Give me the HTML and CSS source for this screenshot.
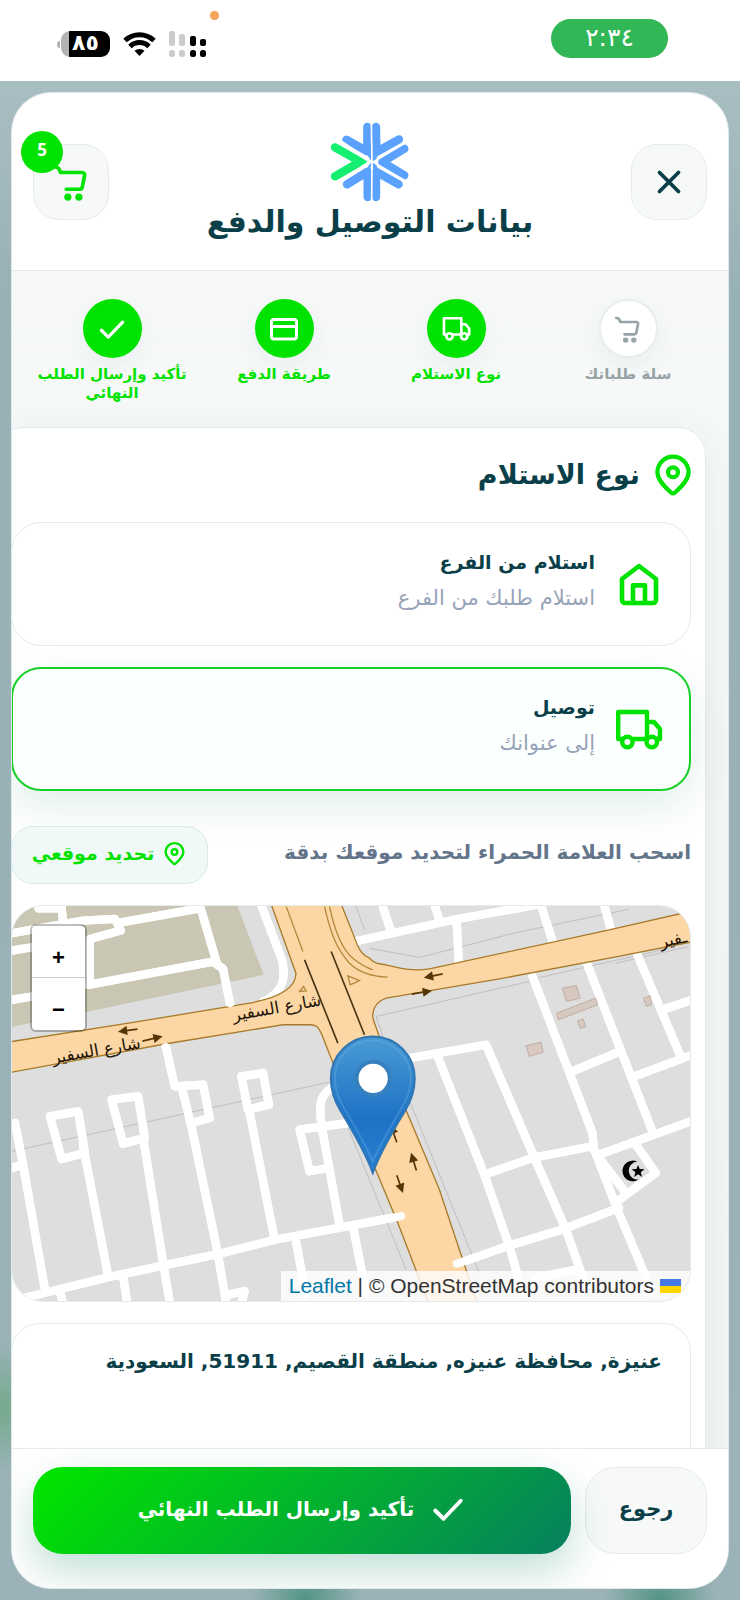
FILE: index.html
```html
<!DOCTYPE html>
<html lang="ar" dir="rtl">
<head>
<meta charset="utf-8">
<meta name="viewport" content="width=device-width, initial-scale=1">
<title>بيانات التوصيل والدفع</title>
<link rel="stylesheet" href="styles.css">
</head>
<body>
<svg class="defs" aria-hidden="true">
  <symbol id="cart" viewBox="0 0 24 24"><g fill="none" stroke="currentColor" stroke-width="2.300" stroke-linecap="round" stroke-linejoin="round"><path d="M2 2.500c1.800 0 2.200.6 2.700 1.700L5.400 6H19a1.600 1.600 0 0 1 1.600 2l-1.500 7.200a1.800 1.800 0 0 1-1.800 1.400H9"/></g><circle cx="10" cy="21.500" r="2.300" fill="currentColor"/><circle cx="17" cy="21.500" r="2.300" fill="currentColor"/></symbol>
  <symbol id="truck" viewBox="0 0 24 24"><g fill="none" stroke="currentColor" stroke-width="2.200" stroke-linejoin="round"><path d="M4 17H1.600V3.500H16V17H8.500M16 8.500h3.500l3 3.500v5h-2M16 17h0"/><circle cx="6.200" cy="18.500" r="2.600"/><circle cx="18.400" cy="18.500" r="2.600"/></g></symbol>
  <symbol id="pin" viewBox="0 0 24 24"><g fill="none" stroke="currentColor" stroke-width="2.300" stroke-linejoin="round"><path d="M20.500 10.500c0 4.700-5 8.800-7.500 11.100a1.500 1.500 0 0 1-2 0C8.500 19.300 3.500 15.200 3.500 10.500a8.500 8.500 0 0 1 17 0z"/><circle cx="12" cy="10.500" r="2.700"/></g></symbol>
  <symbol id="check" viewBox="0 0 24 24"><path d="M3.500 13l5.500 5.500L20.500 6.500" fill="none" stroke="currentColor" stroke-width="2.600" stroke-linecap="round" stroke-linejoin="round"/></symbol>
</svg>

<div class="status">
  <time class="clock"><bdi dir="ltr">٢:٣٤</bdi></time>
  <span class="mic-dot"></span>
  <div class="signals">
    <svg width="38" height="26" viewBox="0 0 38 26" aria-hidden="true"><g fill="#ccc"><rect width="6" height="15" rx="2"/><rect x="10" y="3" width="6" height="12" rx="2"/><rect y="19" width="6" height="7" rx="2.500"/><rect x="10" y="19" width="6" height="7" rx="2.500"/></g><rect x="21" y="5" width="6" height="10" rx="2"/><rect x="31" y="8" width="6" height="7" rx="2"/><rect x="21" y="19" width="6" height="7" rx="2.500"/><rect x="31" y="19" width="6" height="7" rx="2.500"/></svg>
    <svg width="33" height="24" viewBox="0 0 33 24" aria-hidden="true"><g fill="none" stroke="#000" stroke-width="5"><path d="M2 8.500a21 21 0 0 1 29 0"/><path d="M7 14.500a13.500 13.500 0 0 1 19 0"/></g><path d="M16.500 24l-5-5.200a7.500 7.500 0 0 1 10 0z"/></svg>
    <span class="battery"><span>٨٥</span></span>
  </div>
</div>

<main class="panel">
  <header class="head">
    <button class="icon-btn" type="button" aria-label="إغلاق"><svg width="26" height="26" viewBox="0 0 26 26"><path d="M3.500 3.500l19 19M22.500 3.500l-19 19" stroke="currentColor" stroke-width="3.800" stroke-linecap="round"/></svg></button>
    <div class="brand">
      <svg width="82" height="80" viewBox="0 0 246 240" aria-hidden="true">
        <g fill="none" stroke-width="25" stroke-linecap="round" stroke-linejoin="round">
          <path stroke="#14ef70" d="M18 76l76 43-76 44" stroke-linejoin="miter"/>
          <g stroke="#5aa2fd"><path d="M52 53l63 35V15"/><path d="M54 187l62-38v76"/><path d="M141 15l1 75 68-38"/><path d="M141 225v-76l68 38"/><path d="M226 80l-66 40 66 40"/></g>
          <path fill="#5aa2fd" d="M103 80l24 38-4 6-20 36 14 10 11-48 12 48 14-12-16-38 16-38z" stroke="none"/>
        </g>
        <path stroke="#fff" stroke-width="5" d="M127 2l2 116L128 238M132 120l98-58M132 120l98 57" fill="none"/>
        <path stroke="#fff" stroke-width="9" d="M34 58l90 61-88 58" fill="none"/>
      </svg>
      <h1>بيانات التوصيل والدفع</h1>
    </div>
    <button class="icon-btn cart-btn" type="button" aria-label="السلة"><svg width="38" height="38"><use href="#cart"/></svg><span class="badge">5</span></button>
  </header>

  <div class="body">
    <ol class="steps">
      <li class="step"><span class="dot"><svg width="28" height="28"><use href="#cart"/></svg></span>سلة طلباتك</li>
      <li class="step done"><span class="dot"><svg width="29" height="29"><use href="#truck"/></svg></span>نوع الاستلام</li>
      <li class="step done"><span class="dot"><svg width="28" height="28" viewBox="0 0 28 28"><g fill="none" stroke="currentColor" stroke-width="3"><rect x="1.500" y="4.500" width="25" height="19.500" rx="2.500"/><path d="M2 11.500h24"/></g></svg></span>طريقة الدفع</li>
      <li class="step done"><span class="dot"><svg width="30" height="30"><use href="#check"/></svg></span>تأكيد وإرسال الطلب النهائي</li>
    </ol>

    <section class="card">
      <h2><svg width="44" height="44"><use href="#pin"/></svg>نوع الاستلام</h2>
      <label class="option">
        <input type="radio" name="method">
        <svg width="48" height="48" viewBox="0 0 24 24"><path d="M3.500 20V9.500L12 3l8.500 6.500V20a1.500 1.500 0 0 1-1.500 1.500H5A1.500 1.500 0 0 1 3.500 20zM9 21.500v-8.800h6v8.800" fill="none" stroke="currentColor" stroke-width="2.300" stroke-linejoin="round"/></svg>
        <span class="option-text"><b>استلام من الفرع</b><span>استلام طلبك من الفرع</span></span>
      </label>
      <label class="option">
        <input type="radio" name="method" checked>
        <svg width="48" height="48"><use href="#truck"/></svg>
        <span class="option-text"><b>توصيل</b><span>إلى عنوانك</span></span>
      </label>

      <div class="locate">
        <p>اسحب العلامة الحمراء لتحديد موقعك بدقة</p>
        <button type="button"><svg width="25" height="25"><use href="#pin"/></svg>تحديد موقعي</button>
      </div>

      <div class="map">
        <svg class="tiles" viewBox="36 47 2037 1189" preserveAspectRatio="xMidYMid slice" direction="rtl" aria-label="خريطة">
          <defs>
            <linearGradient id="pinFill" x1="0" y1="0" x2="0" y2="1"><stop offset="0" stop-color="#4a9bd3"/><stop offset=".6" stop-color="#1f72c6"/><stop offset="1" stop-color="#2a7fd0"/></linearGradient>
            <marker id="tip" viewBox="0 0 10 10" refX="5" refY="5" markerWidth="32" markerHeight="28" markerUnits="userSpaceOnUse" orient="auto"><path d="M0 0l10 5-10 5z" fill="#573606"/></marker>
          </defs>
          <path fill="#dedede" d="M0 0h2110v1300H0z"/>
          <path fill="#c9c6b3" d="M0 40h710l82 215-527 110L0 418z"/>
          <path fill="none" stroke="#bfbfbf" stroke-width="3" d="M36 785l964-210M1130 380l460-105M1130 380l30 90M1110 175l150 28 290-75 340-70M1225 620l215 530M1040 700l180 440M1070 50l25 70M1590 270l400-90M1850 220l220-50"/>
          <g fill="none" stroke="#c6c6c6" stroke-width="29" stroke-linejoin="round"><use href="#roads"/></g>
          <g id="roads" stroke-linecap="round" stroke-linejoin="round" fill="none">
            <path d="M115 55h70l5 45M36 130l214-38 95-5 18 35-93 25M36 182l60-10M360 98l240-43M600 45l50 170M270 150v135M36 330l60-10M265 285l375-70 30 22 22 110M785 45l62 165c15 60 0 100-57 125"/>
            <path d="M75 1225l265-65 310-65 180-45 280-52 95-18M45 700l25 130 65 370M36 835l34-10M150 680l85-15 20 125-70 18zM250 770l75 390M335 630l80-10 20 125-65 17zM430 745l60 375 20 120M497 465l28 125 85-5 20 100-55 15M545 590l30 120 80 385 25 150M690 1215l45-10-10 40M725 560l65-10 18 95-63 15zM748 660l77 390M1010 585c-50 30-55 50-42 135l52 285M1050 700l-150 20 30 125 60-10M890 1060l30 160M1060 1010l40 200M370 1160l12 80M180 1205l10 40"/>
            <path d="M1050 158l60-13 260-57 240-43M1150 50l25 75M1305 45l15 45M1372 90l6 125M1625 45l38 118M1815 45l22 80M1600 260l180 470 5 50 70 180 80 190 20 60M1765 225l195 500M1915 195l130 305M1720 545l130-55M1900 562l180-67M1990 360l90-30M1455 855l145-50 180-35M1800 795l290-105M1230 505l230-40 150 350 90 205 60 170M1315 500l140 355 75 215 40 140M1370 1125l160-57 160-48 170-65M1910 765l60 85-115 85M1800 805l80 105M1610 1165l125-25"/>
          </g>
          <path class="road" d="M0 461l400-63 350-58c80-15 140-40 139-90L810 30h210l40 100c15 40 20 60 50 75 20 20 30 16 50 20 50 12 80 20 130 12l530-115 330-75v95l-280 55-370 70-340 58c-30 10-50 40-35 75l90 250 105 250 60 180 60 180h-145l-100-260-100-240L965 430c-10-20-15-25-35-25h-80L500 462 0 554z"/>
          <g fill="none" stroke="#b5883b" stroke-width="4"><path d="M860 50l50 135M975 50c20 90 40 130 75 170 30 30 70 40 115 42M990 50c15 70 40 130 70 155 25 20 40 28 60 35M1045 258l35 14-28 13zM900 305l12-15 8 13z"/></g>
          <g stroke="#4a3715" stroke-width="5"><path d="M915 210l100 250M995 185l100 250"/></g>
          <g stroke="#fff" stroke-linecap="round"><path d="M497 472l4 16M690 330l2 10M1110 998l95-18M1372 1123l20-7"/></g>
          <g fill="none" stroke="#573606" stroke-width="5"><path marker-end="url(#tip)" d="M413 418l-45 6"/><path marker-end="url(#tip)" d="M428 454l47-11"/><path marker-end="url(#tip)" d="M1330 252l-43 9"/><path marker-end="url(#tip)" d="M1237 313l47-8"/><path marker-end="url(#tip)" d="M1192 857l14 40"/><path marker-end="url(#tip)" d="M1251 843l-12-40"/><path marker-end="url(#tip)" d="M1192 758l-14-40"/></g>
          <g fill="#d7c9c0" stroke="#c0aea5" stroke-width="3"><path d="M1690 295l42-8 10 38-40 10zM1672 370l118-45 5 20-117 45zM1735 393l17-5 8 22-17 6zM1580 468l45-11 7 30-42 13zM1933 325l20-7 5 27-16 5z"/></g>
          <path d="M1914 816a31 31 0 1 0 4 54 26 26 0 1 1-4-54z"/><path d="M1917 826l5 12 14 1-11 9 4 14-12-8-12 8 4-14-11-9 14-1z"/>
          <g class="street"><text transform="translate(292 498) rotate(-10)">شارع السفير</text><text transform="translate(834 370) rotate(-10)">شارع السفير</text><text transform="translate(2026 165) rotate(-12)">ـفير</text></g>
          <path d="M1120 850c-18-50-58-122-98-188-20-33-28-60-28-96a126 126 0 0 1 252 0c0 36-8 63-28 96-40 66-80 138-98 188z" fill="url(#pinFill)" stroke="#2e76b4" stroke-width="6"/>
          <path d="M1120 815c-20-46-52-102-88-162-18-30-26-53-26-87a114 114 0 0 1 228 0c0 34-8 57-26 87-36 60-68 116-88 162z" fill="none" stroke="#68b2e2" stroke-opacity=".35" stroke-width="6"/>
          <circle cx="1121" cy="566" r="50" fill="#fff" stroke="#3680bd" stroke-width="12"/>
        </svg>
        <div class="zoom"><button type="button" aria-label="تكبير">+</button><button type="button" aria-label="تصغير">−</button></div>
        <div class="credit" dir="ltr"><span><a href="#">Leaflet</a> | © OpenStreetMap contributors</span><svg width="21" height="14" viewBox="0 0 21 14"><path fill="#4478e4" d="M0 0h21v7H0z"/><path fill="#ffd500" d="M0 7h21v7H0z"/></svg></div>
      </div>

      <textarea class="address" aria-label="العنوان">عنيزة, محافظة عنيزه, منطقة القصيم, 51911, السعودية</textarea>
    </section>
  </div>

  <footer class="foot">
    <button class="back" type="button">رجوع</button>
    <button class="submit" type="button"><svg width="36" height="36"><use href="#check"/></svg>تأكيد وإرسال الطلب النهائي</button>
  </footer>
</main>
</body>
</html>
```
FILE: styles.css
```css
:root {
  --green: #00e200;
  --ink: #0a3f49;
  --line: #e5ebeb;
  --soft: #f7f9f9;
}
* { box-sizing: border-box; }
body {
  margin: 0;
  height: 100vh;
  display: flex;
  flex-direction: column;
  overflow: hidden;
  font-family: "DejaVu Sans", sans-serif;
  color: var(--ink);
  background:
    radial-gradient(circle 56px at 306px 100%, #529484, transparent),
    radial-gradient(circle 56px at 660px 100%, #529484, transparent),
    radial-gradient(circle 64px at 0 88%, #74aa8c, transparent),
    linear-gradient(#a9bec2 80px, #98b1b6 300px, #9bb2b8);
}
button, textarea { font: inherit; color: inherit; }
button { padding: 0; display: flex; align-items: center; justify-content: center; }
svg { display: block; flex: none; }
.defs { position: absolute; width: 0; height: 0; }

.status {
  flex: none;
  height: 81px;
  padding: 0 72px 0 57px;
  display: flex;
  align-items: center;
  justify-content: space-between;
  background: #fff;
  position: relative;
}
.clock {
  width: 117px;
  height: 39px;
  margin-bottom: 4px;
  border-radius: 20px;
  background: #31b755;
  color: #fff;
  font-size: 25px;
  line-height: 38px;
  text-align: center;
}
.mic-dot {
  position: absolute;
  left: 210px;
  top: 11px;
  width: 9px;
  height: 9px;
  border-radius: 50%;
  background: #f5a55a;
}
.signals { display: flex; align-items: center; gap: 13px; margin-top: 6px; }
.battery {
  width: 49px;
  height: 26px;
  border-radius: 9px;
  margin-left: 4px;
  background: linear-gradient(90deg, #b3b3b3 8px, #000 8px);
  color: #fff;
  font-size: 22px;
  font-weight: bold;
  line-height: 24px;
  text-align: center;
  position: relative;
}
.battery::after {
  content: "";
  position: absolute;
  left: -4px;
  top: 10px;
  width: 3px;
  height: 7px;
  border-radius: 3px 0 0 3px;
  background: #b3b3b3;
}

.panel {
  flex: 1;
  min-height: 0;
  margin: 11px;
  display: flex;
  flex-direction: column;
  overflow: hidden;
  border: 1px solid #dfe9ea;
  border-radius: 40px;
  background: #fff;
}
.head {
  flex: none;
  display: flex;
  align-items: center;
  justify-content: space-between;
  padding: 28px 21px 28px;
  height: 178px;
  border-bottom: 1px solid var(--line);
}
.icon-btn {
  width: 76px;
  height: 76px;
  border: 1px solid var(--line);
  border-radius: 26px;
  background: var(--soft);
  position: relative;
}
.cart-btn { color: var(--green); }
.badge {
  position: absolute;
  left: -13px;
  top: -14px;
  width: 42px;
  height: 42px;
  border-radius: 50%;
  background: var(--green);
  color: #fff;
  font: bold 17px/38px "Noto Sans", sans-serif;
}
.brand { display: flex; flex-direction: column; align-items: center; }
h1 { margin: 0; font-size: 30px; line-height: 40px; }

.body {
  flex: 1;
  min-height: 0;
  overflow: hidden;
  padding: 28px 22px 0;
  background: linear-gradient(var(--soft), #f2f5f5);
}
.steps {
  list-style: none;
  margin: 0 -8px;
  padding: 0;
  min-height: 128px;
  display: grid;
  grid-template-columns: repeat(4, 1fr);
}
.step {
  display: flex;
  flex-direction: column;
  align-items: center;
  gap: 7px;
  padding: 0 8px;
  text-align: center;
  font-size: 15px;
  font-weight: bold;
  line-height: 19px;
  color: #97a3a6;
}
.dot {
  width: 59px;
  height: 59px;
  border: 2px solid #e8eded;
  border-radius: 50%;
  display: grid;
  place-items: center;
  background: #fff;
  box-shadow: 0 8px 24px rgba(10, 63, 73, .06);
}
.done { color: var(--green); }
.done .dot { background: var(--green); border-color: var(--green); color: #fff; }

.card {
  margin-left: -38px;
  padding: 20px 14px;
  border: 1px solid var(--line);
  border-radius: 28px;
  background: #fff;
  box-shadow: 0 8px 40px rgba(10, 63, 73, .07);
  display: flex;
  flex-direction: column;
  gap: 21px;
}
h2 {
  margin: 0;
  height: 53px;
  display: flex;
  align-items: center;
  gap: 11px;
  font-size: 27px;
  line-height: 40px;
}
h2 svg { margin-right: -4px; color: var(--green); }
.option {
  display: flex;
  align-items: center;
  gap: 20px;
  height: 124px;
  padding: 0 27px;
  border: 1px solid var(--line);
  border-radius: 30px;
}
.option input { position: absolute; opacity: 0; }
.option svg { color: var(--green); }
.option-text { display: grid; margin-bottom: 8px; font-size: 19px; line-height: 36px; }
.option-text span { color: #97a3b8; font-size: 21px; }
.option:has(:checked) {
  border: 2px solid #19d028;
  padding: 0 26px;
  background: #fbfffd;
  box-shadow: 0 16px 40px rgba(10, 120, 95, .12);
}
.locate {
  display: flex;
  align-items: center;
  justify-content: space-between;
  padding-top: 14px;
}
.locate p { margin: 0 0 6px; font-size: 20px; font-weight: bold; line-height: 30px; color: #64748b; }
.locate button {
  width: 197px;
  height: 58px;
  gap: 8px;
  padding-bottom: 4px;
  border: 1px solid #d6ebe6;
  border-radius: 22px;
  background: #f1f9f8;
  color: var(--green);
  font-size: 19px;
  font-weight: bold;
}

.map {
  position: relative;
  overflow: hidden;
  border: 1px solid var(--line);
  border-radius: 32px;
}
.tiles { width: 100%; height: auto; aspect-ratio: 678 / 395; }
#roads { stroke-width: 25; }
.tiles > #roads { stroke: #fff; }
.road { fill: #fcd6a4; stroke: #a87b2a; stroke-width: 4; }
.tiles > g[stroke="#fff"] { stroke-width: 24; }
.street { font: 50px "DejaVu Sans", sans-serif; text-anchor: middle; fill: #1c1408; }
.zoom {
  position: absolute;
  left: 18px;
  top: 18px;
  border: 2px solid rgba(0, 0, 0, .25);
  border-radius: 6px;
}
.zoom button {
  width: 53px;
  height: 52px;
  padding-top: 12px;
  border: 0;
  background: #fff;
  color: #000;
  font: bold 22px "Liberation Sans", sans-serif;
}
.zoom button:first-child { border-bottom: 1px solid #ccc; border-radius: 4px 4px 0 0; }
.zoom button:last-child { border-radius: 0 0 4px 4px; }
.credit {
  position: absolute;
  right: 0;
  bottom: 0;
  display: flex;
  align-items: center;
  gap: 6px;
  padding: 0 9px 0 8px;
  background: rgba(255, 255, 255, .8);
  color: #333;
  font: 21px/30px "Liberation Sans", sans-serif;
  white-space: nowrap;
}
.credit a { color: #0078a8; text-decoration: none; }

.address {
  width: 100%;
  height: 180px;
  padding: 18px 28px;
  border: 1px solid var(--line);
  border-radius: 28px;
  background: #fff;
  font-size: 20px;
  font-weight: bold;
  line-height: 38px;
  resize: none;
  overflow: hidden;
}

.foot {
  flex: none;
  display: flex;
  gap: 14px;
  padding: 18px 21px 34px;
  border-top: 1px solid var(--line);
  background: #fff;
}
.foot button { height: 87px; border-radius: 30px; font-weight: bold; padding-bottom: 4px; }
.back { width: 122px; border: 1px solid var(--line); background: var(--soft); font-size: 21px; }
.submit {
  flex: 1;
  gap: 16px;
  border: 0;
  color: #fff;
  font-size: 20px;
  background: linear-gradient(135deg, #00e200 5%, #067f5f);
  box-shadow: 0 18px 40px rgba(10, 130, 105, .25);
}
```
